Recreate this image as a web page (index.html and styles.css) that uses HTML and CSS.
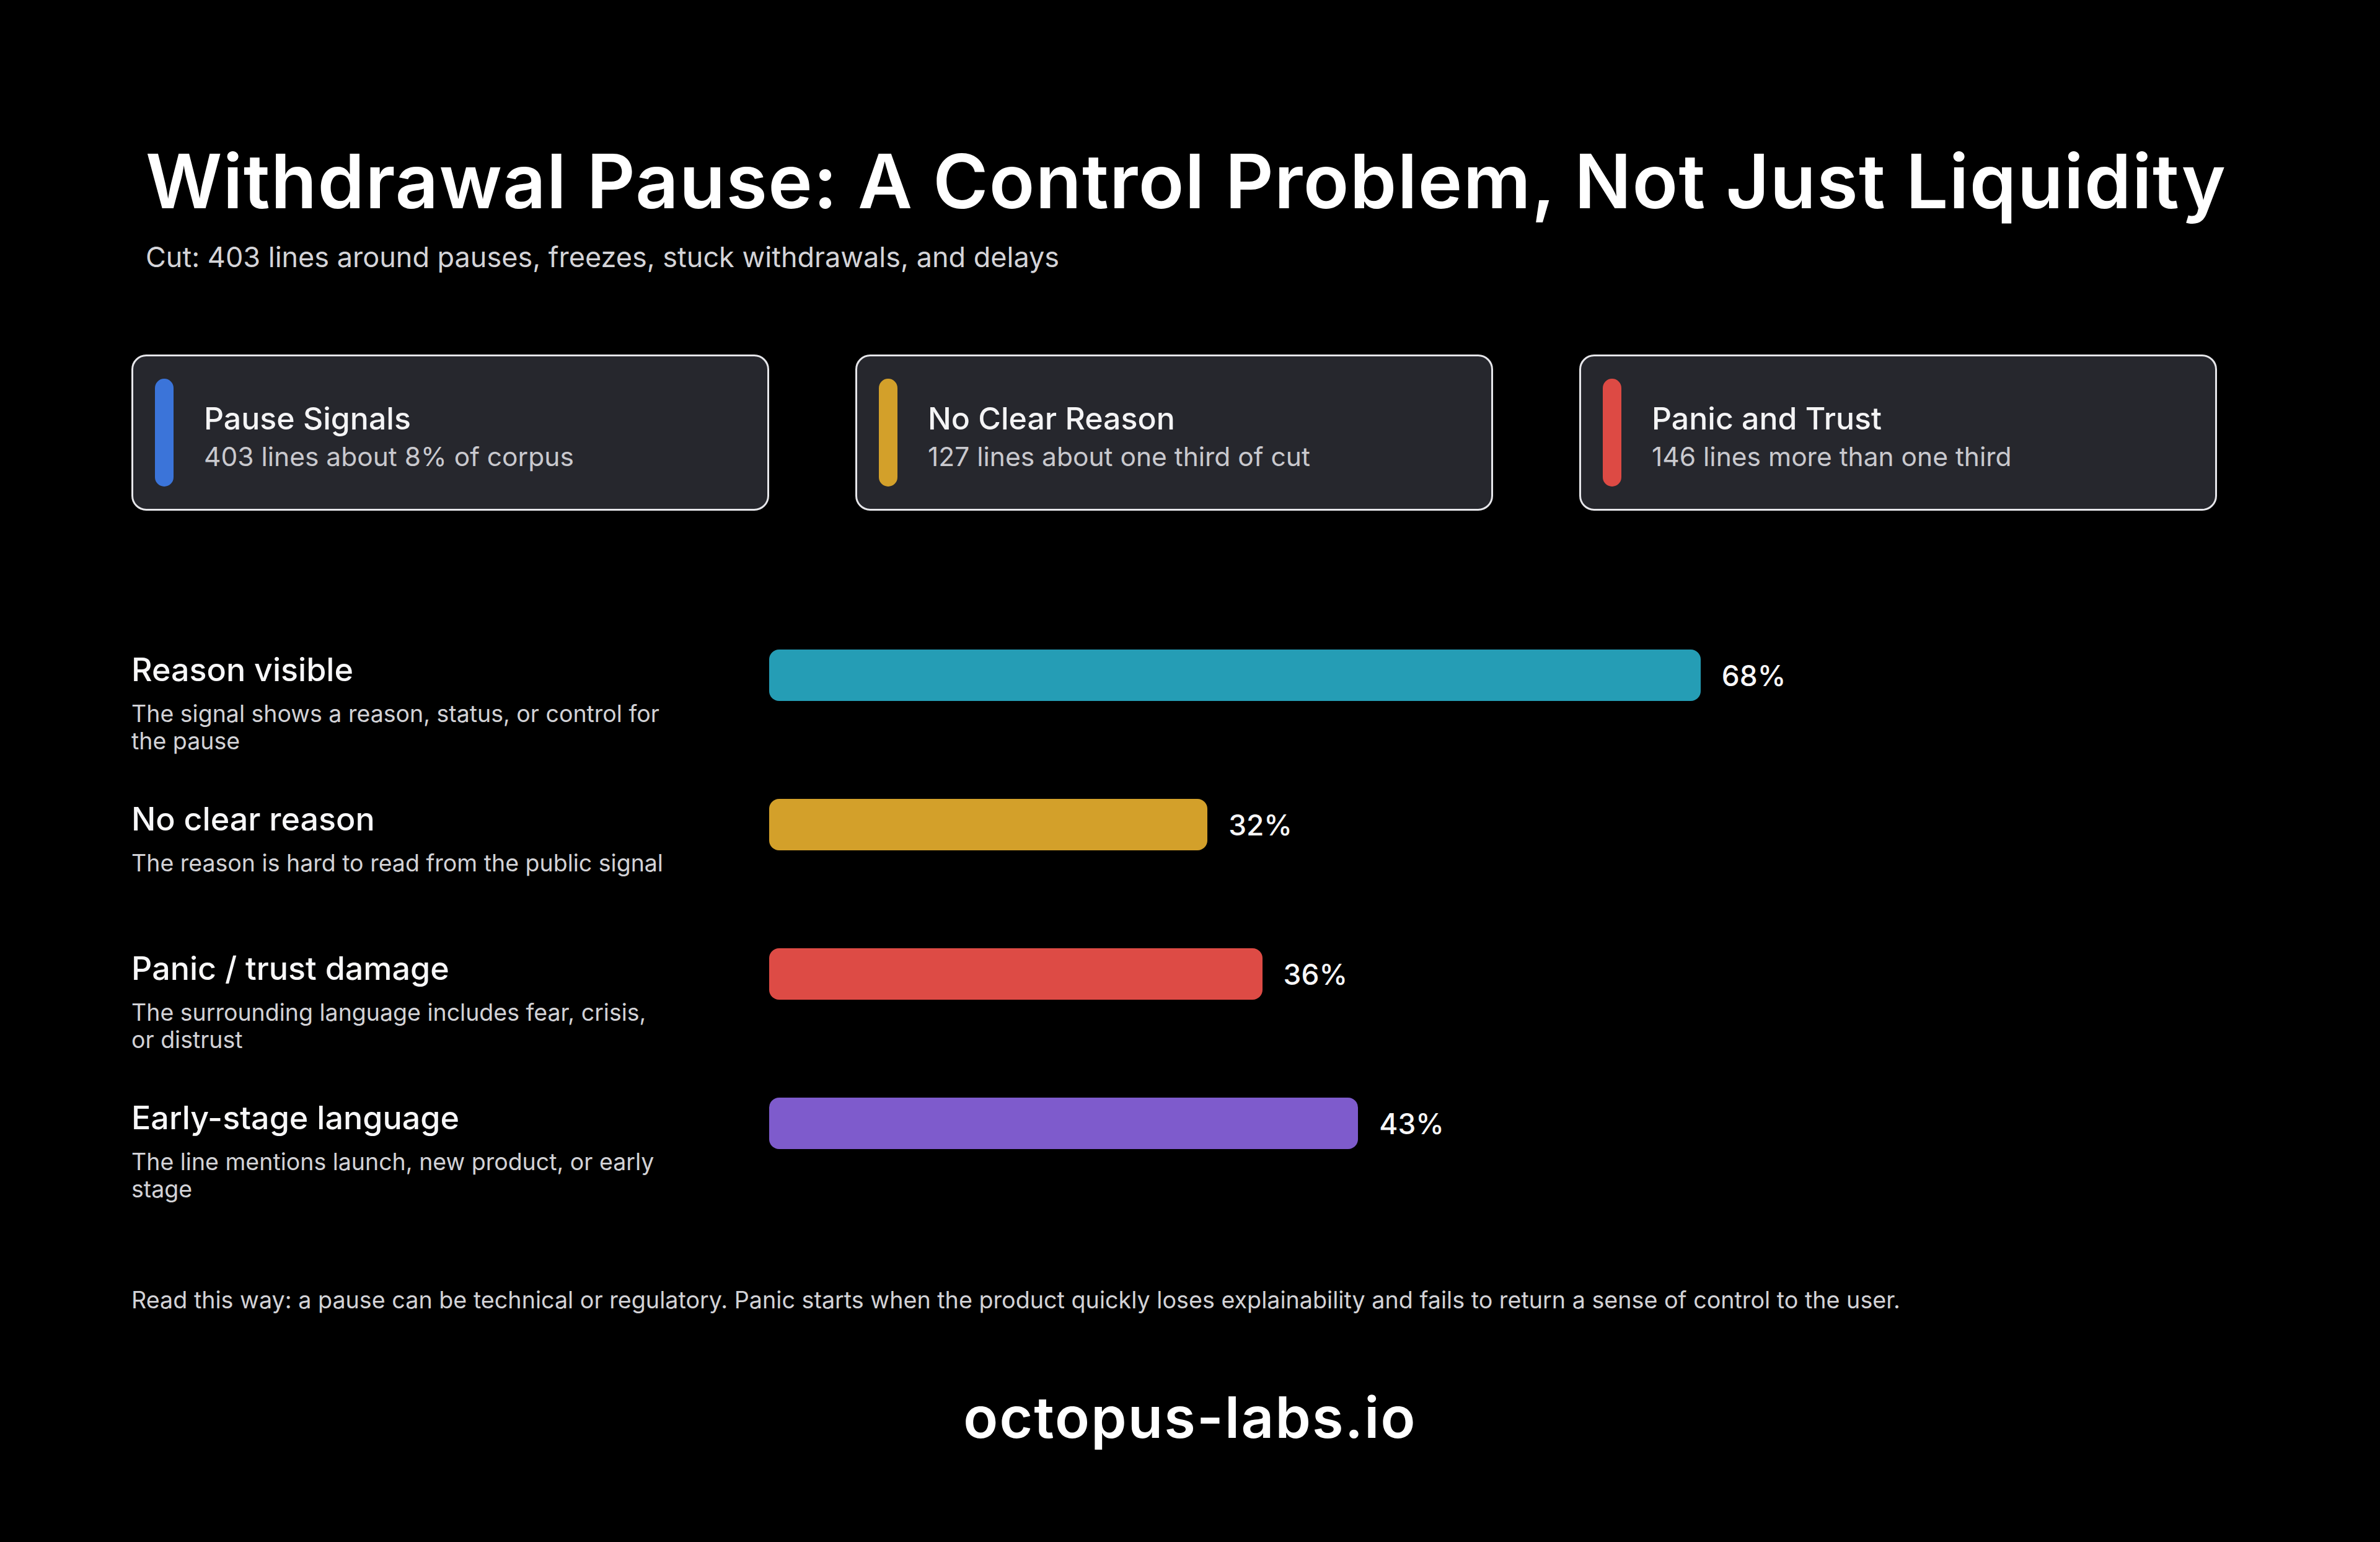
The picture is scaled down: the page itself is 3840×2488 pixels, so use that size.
FILE: index.html
```html
<!DOCTYPE html>
<html lang="en">
<head>
<meta charset="utf-8">
<title>Withdrawal Pause</title>
<link rel="stylesheet" href="styles.css">
</head>
<body>
<main class="page">
  <header class="head">
    <h1 class="title">Withdrawal Pause: A Control Problem, Not Just Liquidity</h1>
    <p class="subtitle">Cut: 403 lines around pauses, freezes, stuck withdrawals, and delays</p>
  </header>

  <section class="cards">
    <div class="card">
      <span class="card-bar blue"></span>
      <div class="card-text">
        <div class="card-title">Pause Signals</div>
        <div class="card-sub">403 lines about 8% of corpus</div>
      </div>
    </div>
    <div class="card">
      <span class="card-bar gold"></span>
      <div class="card-text">
        <div class="card-title">No Clear Reason</div>
        <div class="card-sub">127 lines about one third of cut</div>
      </div>
    </div>
    <div class="card">
      <span class="card-bar red"></span>
      <div class="card-text">
        <div class="card-title">Panic and Trust</div>
        <div class="card-sub">146 lines more than one third</div>
      </div>
    </div>
  </section>

  <section class="rows">
    <div class="row">
      <div class="label">
        <div class="label-title">Reason visible</div>
        <div class="label-desc">The signal shows a reason, status, or control for the pause</div>
      </div>
      <div class="track">
        <span class="bar teal" style="width:68%"></span>
        <span class="pct">68%</span>
      </div>
    </div>
    <div class="row">
      <div class="label">
        <div class="label-title">No clear reason</div>
        <div class="label-desc">The reason is hard to read from the public signal</div>
      </div>
      <div class="track">
        <span class="bar gold" style="width:32%"></span>
        <span class="pct">32%</span>
      </div>
    </div>
    <div class="row">
      <div class="label">
        <div class="label-title">Panic / trust damage</div>
        <div class="label-desc">The surrounding language includes fear, crisis, or distrust</div>
      </div>
      <div class="track">
        <span class="bar red" style="width:36%"></span>
        <span class="pct">36%</span>
      </div>
    </div>
    <div class="row">
      <div class="label">
        <div class="label-title">Early-stage language</div>
        <div class="label-desc">The line mentions launch, new product, or early stage</div>
      </div>
      <div class="track">
        <span class="bar purple" style="width:43%"></span>
        <span class="pct">43%</span>
      </div>
    </div>
  </section>

  <p class="note">Read this way: a pause can be technical or regulatory. Panic starts when the product quickly loses explainability and fails to return a sense of control to the user.</p>

  <footer class="brand">octopus-labs.io</footer>
</main>
</body>
</html>
```

FILE: styles.css
```css
* { box-sizing: border-box; }

html, body {
  margin: 0;
  padding: 0;
  background: #000;
}

body {
  font-family: "Inter", "Noto Sans", "Liberation Sans", sans-serif;
  color: #f4f4f5;
  width: 3840px;
  height: 2488px;
  overflow: hidden;
}

.page {
  padding: 220px 0 0 212px;
  width: 3840px;
}

.head {
  padding-left: 23px;
}

.title {
  margin: 0;
  font-size: 121px;
  line-height: 144px;
  font-weight: 600;
  letter-spacing: 1.35px;
  color: #ffffff;
  white-space: nowrap;
}

.subtitle {
  margin: 24px 0 0;
  font-size: 45px;
  line-height: 54px;
  font-weight: 400;
  color: #d4d4d8;
}

.cards {
  display: grid;
  grid-template-columns: repeat(3, 1029px);
  column-gap: 139px;
  margin-top: 130px;
}

.card {
  height: 252px;
  background: #26272d;
  border: 3px solid #e6e6ea;
  border-radius: 24px;
  display: flex;
  align-items: center;
  padding-left: 35px;
  gap: 49px;
}

.card-bar {
  width: 30px;
  height: 174px;
  border-radius: 15px;
  flex: none;
}

.card-bar.blue { background: #3b74d9; }
.card-bar.gold { background: #d3a02a; }
.card-bar.red { background: #dd4a44; }

.card-text {
  display: flex;
  flex-direction: column;
  gap: 6px;
  padding-top: 12px;
}

.card-title {
  font-size: 50px;
  line-height: 59px;
  font-weight: 500;
  color: #f4f4f5;
}

.card-sub {
  font-size: 42.5px;
  line-height: 51px;
  font-weight: 400;
  color: #c9c9ce;
}

.rows {
  margin-top: 224px;
  display: grid;
  grid-auto-rows: 241px;
}

.row {
  display: grid;
  grid-template-columns: 880px 2210px;
  column-gap: 149px;
  align-items: start;
}

.label {
  padding-top: 2px;
}

.label-title {
  font-size: 52px;
  line-height: 62px;
  font-weight: 500;
  color: #f7f7f8;
}

.label-desc {
  margin-top: 18px;
  font-size: 37.5px;
  line-height: 44px;
  font-weight: 400;
  color: #d2d2d6;
  max-width: 875px;
}

.track {
  display: flex;
  align-items: center;
  gap: 34px;
  height: 83px;
}

.bar {
  height: 83px;
  border-radius: 16px;
  flex: none;
}

.bar.teal { background: #259db5; }
.bar.gold { background: #d3a02a; }
.bar.red { background: #dd4b45; }
.bar.purple { background: #7e5bcc; }

.pct {
  font-size: 46px;
  line-height: 56px;
  font-weight: 500;
  color: #f7f7f8;
}

.note {
  margin: 62px 0 0;
  font-size: 37.7px;
  line-height: 46px;
  font-weight: 400;
  color: #d2d2d6;
  white-space: nowrap;
}

.brand {
  margin: 112px 0 0 -212px;
  width: 3840px;
  text-align: center;
  font-size: 92px;
  line-height: 110px;
  font-weight: 600;
  letter-spacing: 2.2px;
  color: #ffffff;
}
```
